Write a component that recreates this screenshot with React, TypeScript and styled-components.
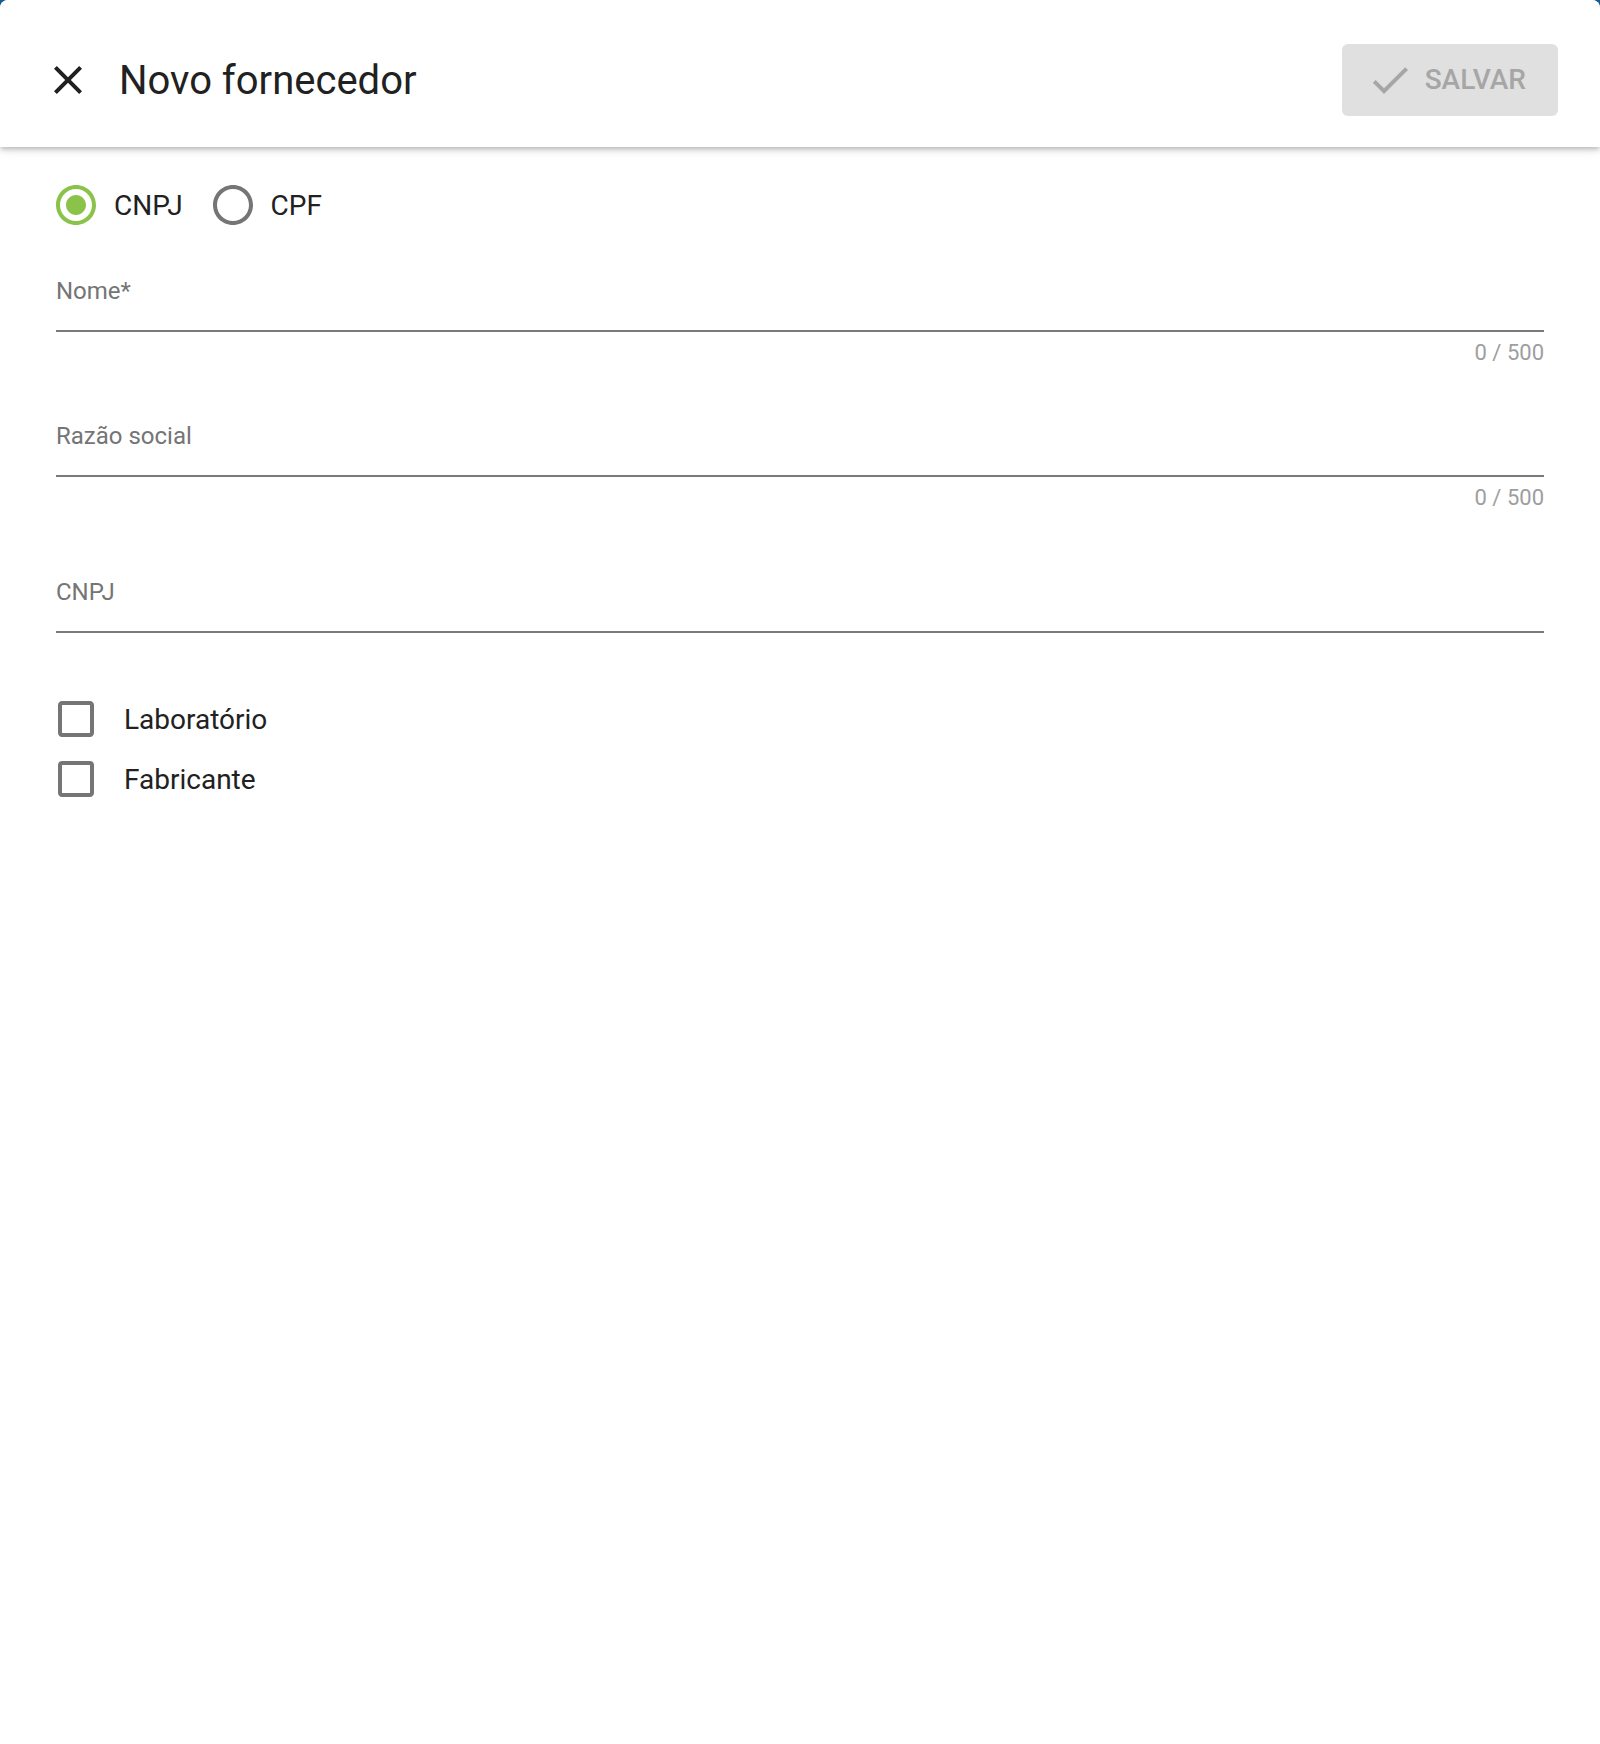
import * as React from 'react';
import styled, { createGlobalStyle } from 'styled-components';

const GlobalStyle = createGlobalStyle`
  body {
    margin: 0;
    background: #1b5a8c;
    font-family: Roboto, "Liberation Sans", Arial, sans-serif;
  }
`;

const closePath =
  'M19 6.41 17.59 5 12 10.59 6.41 5 5 6.41 10.59 12 5 17.59 6.41 19 12 13.41 17.59 19 19 17.59 13.41 12z';
const checkPath = 'M9 16.17 4.83 12l-1.42 1.41L9 19 21 7l-1.41-1.41z';
const radioOnPath =
  'M12 7c-2.76 0-5 2.24-5 5s2.24 5 5 5 5-2.24 5-5-2.24-5-5-5zm0-5C6.48 2 2 6.48 2 12s4.48 10 10 10 10-4.48 10-10S17.52 2 12 2zm0 18c-4.42 0-8-3.58-8-8s3.58-8 8-8 8 3.58 8 8-3.58 8-8 8z';
const radioOffPath =
  'M12 2C6.48 2 2 6.48 2 12s4.48 10 10 10 10-4.48 10-10S17.52 2 12 2zm0 18c-4.42 0-8-3.58-8-8s3.58-8 8-8 8 3.58 8 8-3.58 8-8 8z';
const boxPath =
  'M19 5v14H5V5h14m0-2H5c-1.1 0-2 .9-2 2v14c0 1.1.9 2 2 2h14c1.1 0 2-.9 2-2V5c0-1.1-.9-2-2-2z';

const Icon: React.FC<{ d: string; color: string }> = ({ d, color }) => (
  <IconSvg viewBox="0 0 24 24" fill={color}>
    <path d={d} />
  </IconSvg>
);

const Radio: React.FC<{ label: string; checked?: boolean }> = ({ label, checked }) => (
  <RadioItem>
    <Icon d={checked ? radioOnPath : radioOffPath} color={checked ? '#8bc34a' : '#757575'} />
    <OptionText>{label}</OptionText>
  </RadioItem>
);

const TextField: React.FC<{ label: string; counter?: string; top: number }> = ({
  label,
  counter,
  top,
}) => (
  <Field $top={top}>
    <InputBox>
      <Label>{label}</Label>
    </InputBox>
    {counter && <Counter>{counter}</Counter>}
  </Field>
);

const Checkbox: React.FC<{ label: string }> = ({ label }) => (
  <CheckRow>
    <Icon d={boxPath} color="#757575" />
    <CheckText>{label}</CheckText>
  </CheckRow>
);

const App: React.FC = () => {
  return (
    <Panel>
      <GlobalStyle />
      <Header>
        <Icon d={closePath} color="#212121" />
        <Title>Novo fornecedor</Title>
        <SaveButton disabled>
          <Icon d={checkPath} color="#a6a6a6" />
          SALVAR
        </SaveButton>
      </Header>
      <Form>
        <RadioGroup>
          <Radio label="CNPJ" checked />
          <Radio label="CPF" />
        </RadioGroup>
        <TextField label="Nome*" counter="0 / 500" top={48} />
        <TextField label="Razão social" counter="0 / 500" top={57} />
        <TextField label="CNPJ" top={68} />
        <CheckList>
          <Checkbox label="Laboratório" />
          <Checkbox label="Fabricante" />
        </CheckList>
      </Form>
    </Panel>
  );
};

export default App;

const Panel = styled.div`
  min-height: 100vh;
  background: #fff;
  border-radius: 8px 8px 0 0;
  overflow: hidden;
`;

const IconSvg = styled.svg`
  width: 48px;
  height: 48px;
  flex-shrink: 0;
  display: block;
`;

const Header = styled.header`
  display: flex;
  align-items: center;
  box-sizing: border-box;
  height: 147px;
  padding: 12px 42px 0 44px;
  background: #fff;
  box-shadow: 0 2px 4px -1px rgba(0, 0, 0, 0.16), 0 4px 5px 0 rgba(0, 0, 0, 0.1),
    0 1px 12px 0 rgba(0, 0, 0, 0.1);
  position: relative;
  z-index: 1;
`;

const Title = styled.h1`
  margin: 2px 0 0 27px;
  font-size: 40px;
  font-weight: 400;
  color: #212121;
`;

const SaveButton = styled.button`
  margin-left: auto;
  display: flex;
  align-items: center;
  gap: 11px;
  height: 72px;
  padding: 0 32px 0 24px;
  border: none;
  border-radius: 6px;
  background: #e0e0e0;
  color: #a6a6a6;
  font-family: Roboto, "Liberation Sans", Arial, sans-serif;
  font-size: 28px;
  font-weight: 500;
`;

const Form = styled.div`
  padding: 34px 56px 0;
`;

const RadioGroup = styled.div`
  display: flex;
  gap: 26px;
  margin-left: -4px;
`;

const RadioItem = styled.label`
  display: flex;
  align-items: center;
  gap: 14px;
  height: 48px;
`;

const OptionText = styled.span`
  font-size: 28px;
  color: #212121;
`;

const Field = styled.div<{ $top: number }>`
  margin-top: ${(p) => p.$top}px;
`;

const InputBox = styled.div`
  padding-bottom: 25px;
  border-bottom: 2px solid #7a7a7a;
`;

const Label = styled.div`
  font-size: 24px;
  line-height: 28px;
  color: #757575;
`;

const Counter = styled.div`
  margin-top: 9px;
  text-align: right;
  font-size: 22px;
  line-height: 24px;
  color: #9e9e9e;
`;

const CheckList = styled.div`
  display: flex;
  flex-direction: column;
  gap: 12px;
  margin: 62px 0 0 -4px;
`;

const CheckRow = styled.label`
  display: flex;
  align-items: center;
  gap: 24px;
  height: 48px;
`;

const CheckText = styled.span`
  font-size: 28px;
  color: #212121;
`;
